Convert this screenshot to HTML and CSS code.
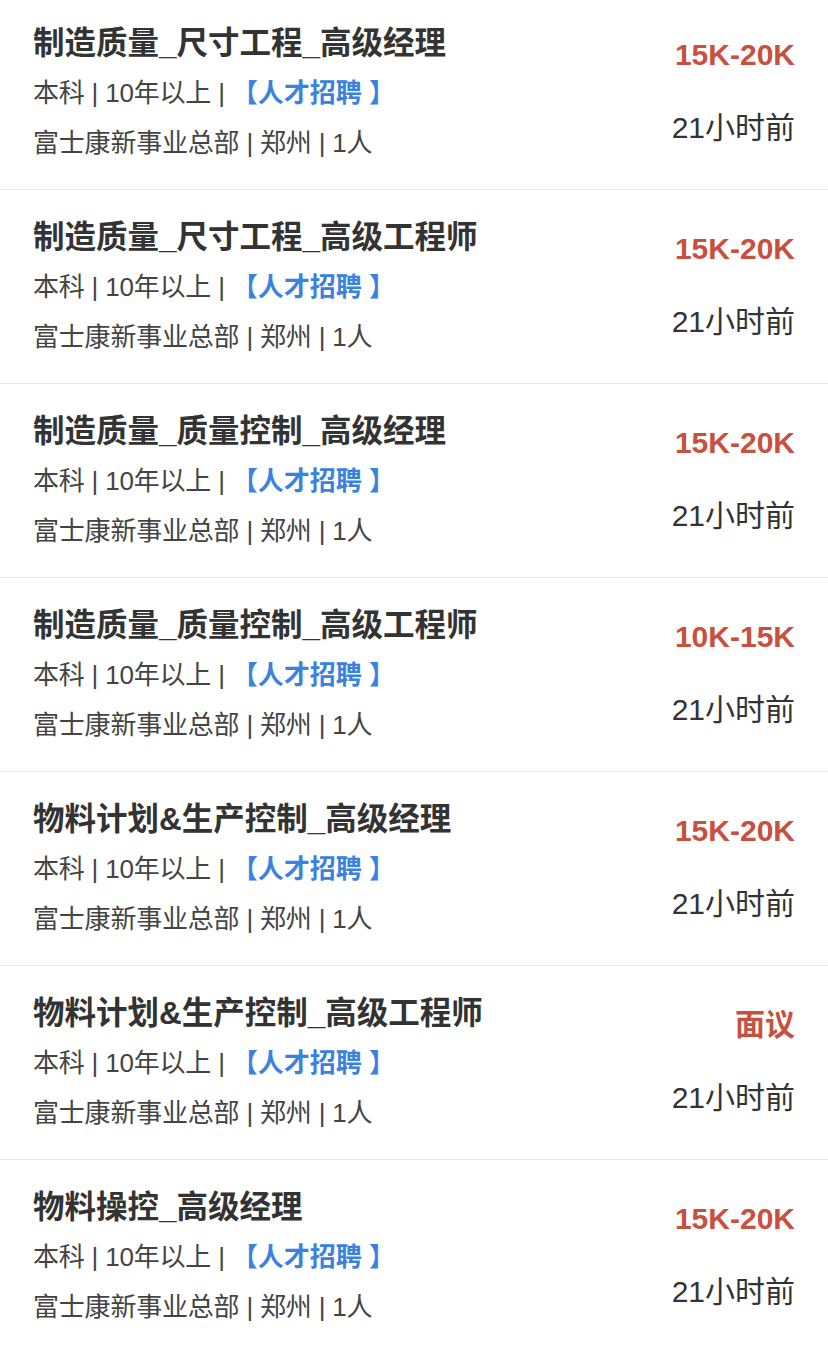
FILE: index.html
```html
<!DOCTYPE html>
<html lang="zh-CN">
<head>
<meta charset="utf-8">
<title>职位列表</title>
<link rel="stylesheet" href="styles.css">
</head>
<body>
<ul class="job-list">
  <li class="job">
    <div class="info">
      <div class="title">制造质量_尺寸工程_高级经理</div>
      <div class="meta">本科 | 10年以上 | <span class="tag">【人才招聘 】</span></div>
      <div class="meta">富士康新事业总部 | 郑州 | 1人</div>
    </div>
    <div class="side">
      <div class="salary">15K-20K</div>
      <div class="time">21小时前</div>
    </div>
  </li>
  <li class="job">
    <div class="info">
      <div class="title">制造质量_尺寸工程_高级工程师</div>
      <div class="meta">本科 | 10年以上 | <span class="tag">【人才招聘 】</span></div>
      <div class="meta">富士康新事业总部 | 郑州 | 1人</div>
    </div>
    <div class="side">
      <div class="salary">15K-20K</div>
      <div class="time">21小时前</div>
    </div>
  </li>
  <li class="job">
    <div class="info">
      <div class="title">制造质量_质量控制_高级经理</div>
      <div class="meta">本科 | 10年以上 | <span class="tag">【人才招聘 】</span></div>
      <div class="meta">富士康新事业总部 | 郑州 | 1人</div>
    </div>
    <div class="side">
      <div class="salary">15K-20K</div>
      <div class="time">21小时前</div>
    </div>
  </li>
  <li class="job">
    <div class="info">
      <div class="title">制造质量_质量控制_高级工程师</div>
      <div class="meta">本科 | 10年以上 | <span class="tag">【人才招聘 】</span></div>
      <div class="meta">富士康新事业总部 | 郑州 | 1人</div>
    </div>
    <div class="side">
      <div class="salary">10K-15K</div>
      <div class="time">21小时前</div>
    </div>
  </li>
  <li class="job">
    <div class="info">
      <div class="title">物料计划&amp;生产控制_高级经理</div>
      <div class="meta">本科 | 10年以上 | <span class="tag">【人才招聘 】</span></div>
      <div class="meta">富士康新事业总部 | 郑州 | 1人</div>
    </div>
    <div class="side">
      <div class="salary">15K-20K</div>
      <div class="time">21小时前</div>
    </div>
  </li>
  <li class="job">
    <div class="info">
      <div class="title">物料计划&amp;生产控制_高级工程师</div>
      <div class="meta">本科 | 10年以上 | <span class="tag">【人才招聘 】</span></div>
      <div class="meta">富士康新事业总部 | 郑州 | 1人</div>
    </div>
    <div class="side">
      <div class="salary">面议</div>
      <div class="time">21小时前</div>
    </div>
  </li>
  <li class="job">
    <div class="info">
      <div class="title">物料操控_高级经理</div>
      <div class="meta">本科 | 10年以上 | <span class="tag">【人才招聘 】</span></div>
      <div class="meta">富士康新事业总部 | 郑州 | 1人</div>
    </div>
    <div class="side">
      <div class="salary">15K-20K</div>
      <div class="time">21小时前</div>
    </div>
  </li>
</ul>
</body>
</html>
```

FILE: styles.css
```css
html, body {
  margin: 0;
  padding: 0;
  background: #ffffff;
}

body {
  font-family: "Liberation Sans", "Noto Sans CJK SC", sans-serif;
  color: #333333;
  overflow: hidden;
}

.job-list {
  list-style: none;
  margin: -4px 0 0 0;
  padding: 0;
}

.job {
  display: flex;
  justify-content: space-between;
  align-items: flex-start;
  padding: 22px 33px 21px 33px;
  border-bottom: 1px solid #e8e8e8;
}

.info {
  display: flex;
  flex-direction: column;
}

.title {
  font-size: 31.5px;
  line-height: 50px;
  font-weight: 700;
  color: #333333;
  white-space: nowrap;
}

.meta {
  font-size: 26px;
  line-height: 50px;
  color: #444444;
  white-space: nowrap;
  letter-spacing: -0.2px;
}

.tag {
  color: #3a82e0;
  font-weight: 700;
  letter-spacing: 0;
}

.side {
  display: flex;
  flex-direction: column;
  align-items: flex-end;
  padding-top: 12px;
  gap: 23px;
}

.salary {
  font-size: 30px;
  line-height: 50px;
  font-weight: 700;
  color: #c8503f;
  white-space: nowrap;
}

.time {
  font-size: 30px;
  line-height: 50px;
  color: #333333;
  white-space: nowrap;
}
```
